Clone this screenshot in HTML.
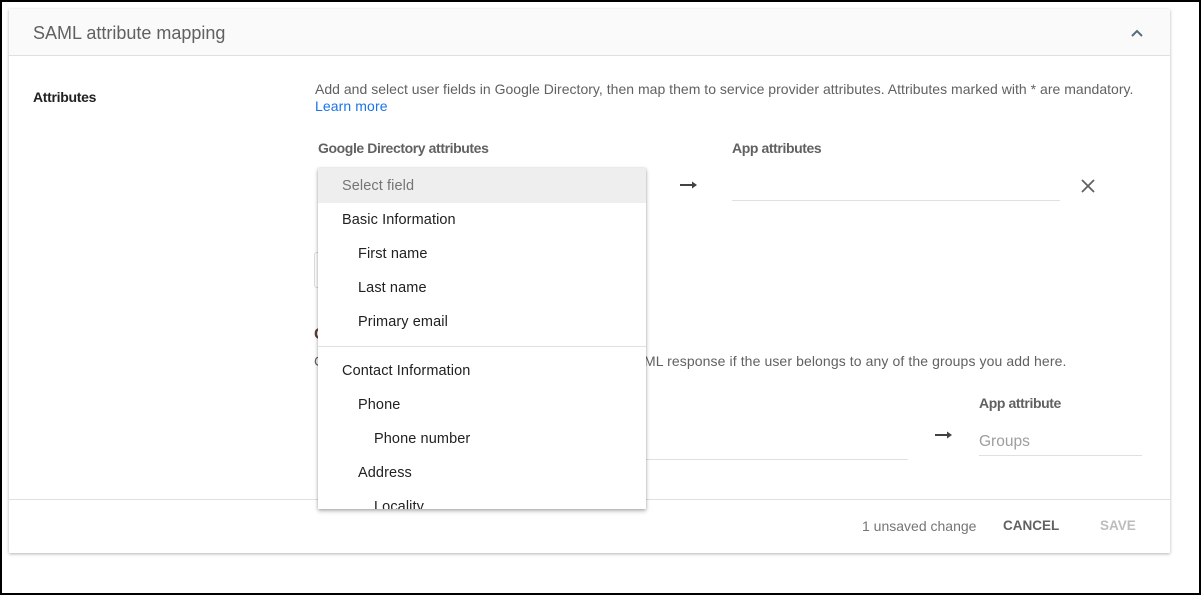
<!DOCTYPE html>
<html><head><style>
*{margin:0;padding:0;box-sizing:border-box}
body{width:1201px;height:595px;overflow:hidden;background:#fff;font-family:"Liberation Sans",Arial,sans-serif;position:relative}
.frame{position:absolute;left:0;top:0;width:1201px;height:595px;border:2px solid #000}
.card{position:absolute;left:9px;top:9px;width:1161px;height:544px;background:#fff;box-shadow:0 1px 3px rgba(0,0,0,.3);}
.hdr{position:absolute;left:0;top:0;width:100%;height:47px;background:#fafafa;border-bottom:1px solid #e0e0e0}
.t{position:absolute;white-space:nowrap}
.foot{position:absolute;left:0;top:490px;width:100%;border-top:1px solid #e0e0e0}
.menu{position:absolute;left:318px;top:168px;width:328px;height:341px;background:#fff;box-shadow:0 2px 4px rgba(0,0,0,.3),0 0 2px rgba(0,0,0,.15);overflow:hidden}
.menu .i{position:absolute;font-size:14.5px;color:#212121;white-space:nowrap;letter-spacing:0.1px}
</style></head><body>
<div class="card">
 <div class="hdr">
  <div class="t" style="left:24px;top:14px;font-size:18px;color:#616161">SAML attribute mapping</div>
  <svg class="t" style="left:1121px;top:19px" width="14" height="10" viewBox="0 0 14 10"><path d="M2 8 L7 3 L12 8" fill="none" stroke="#546e7a" stroke-width="2"/></svg>
 </div>
 <div class="t" style="left:24px;top:80px;font-size:14px;font-weight:bold;color:#212121;letter-spacing:-0.3px">Attributes</div>
 <div class="t" style="left:306px;top:72px;font-size:14px;color:#616161;letter-spacing:0.02px">Add and select user fields in Google Directory, then map them to service provider attributes. Attributes marked with * are mandatory.</div>
 <div class="t" style="left:306px;top:89px;font-size:14px;color:#1a73e8;letter-spacing:0.1px">Learn more</div>
 <div class="t" style="left:309px;top:131px;font-size:14px;font-weight:bold;color:#616161;letter-spacing:-0.4px">Google Directory attributes</div>
 <div class="t" style="left:723px;top:131px;font-size:14px;font-weight:bold;color:#616161;letter-spacing:-0.4px">App attributes</div>
 <svg class="t" style="left:671px;top:171px" width="18" height="10" viewBox="0 0 18 10"><path d="M0 5H15" stroke="#424242" stroke-width="2"/><path d="M12 1.5L17 5L12 8.5Z" fill="#424242"/></svg>
 <div style="position:absolute;left:723px;top:191px;width:328px;border-top:1px solid #e0e0e0"></div>
 <svg class="t" style="left:1071px;top:169px" width="16" height="16" viewBox="0 0 16 16"><path d="M2 2L14 14M14 2L2 14" stroke="#616161" stroke-width="1.8"/></svg>
 <div style="position:absolute;left:305px;top:243px;width:20px;height:36px;border:1px solid #ddd;border-radius:3px"></div>
 <div class="t" style="left:305px;top:317px;font-size:16px;font-weight:bold;color:#5d4037">G</div>
 <div class="t" style="left:305px;top:344px;font-size:14px;color:#616161">C</div>
 <div class="t" style="left:635px;top:344px;font-size:14px;color:#616161;letter-spacing:0.1px">ML response if the user belongs to any of the groups you add here.</div>
 <div class="t" style="left:970px;top:386px;font-size:14px;font-weight:bold;color:#616161;letter-spacing:-0.4px">App attribute</div>
 <svg class="t" style="left:926px;top:421px" width="18" height="10" viewBox="0 0 18 10"><path d="M0 5H15" stroke="#424242" stroke-width="2"/><path d="M12 1.5L17 5L12 8.5Z" fill="#424242"/></svg>
 <div class="t" style="left:970px;top:424px;font-size:15.5px;color:#9e9e9e">Groups</div>
 <div style="position:absolute;left:970px;top:446px;width:163px;border-top:1px solid #e0e0e0"></div>
 <div style="position:absolute;left:630px;top:450px;width:269px;border-top:1px solid #e0e0e0"></div>
 <div class="foot"></div>
 <div class="t" style="left:853px;top:509px;font-size:14px;color:#757575;letter-spacing:0px">1 unsaved change</div>
 <div class="t" style="left:994px;top:509px;font-size:13.5px;font-weight:bold;color:#616161">CANCEL</div>
 <div class="t" style="left:1091px;top:509px;font-size:13.5px;font-weight:bold;color:#bdbdbd">SAVE</div>
</div>
<div class="menu">
 <div style="position:absolute;left:0;top:0;width:100%;height:35px;background:#eeeeee"></div>
 <div class="i" style="left:24px;top:10px;color:#757575">Select field</div>
 <div class="i" style="left:24px;top:44px">Basic Information</div>
 <div class="i" style="left:40px;top:78px">First name</div>
 <div class="i" style="left:40px;top:112px">Last name</div>
 <div class="i" style="left:40px;top:146px">Primary email</div>
 <div style="position:absolute;left:0;top:178px;width:100%;border-top:1px solid #e0e0e0"></div>
 <div class="i" style="left:24px;top:195px">Contact Information</div>
 <div class="i" style="left:40px;top:229px">Phone</div>
 <div class="i" style="left:56px;top:263px">Phone number</div>
 <div class="i" style="left:40px;top:297px">Address</div>
 <div class="i" style="left:56px;top:331px">Locality</div>
</div>
<div class="frame"></div>
</body></html>
